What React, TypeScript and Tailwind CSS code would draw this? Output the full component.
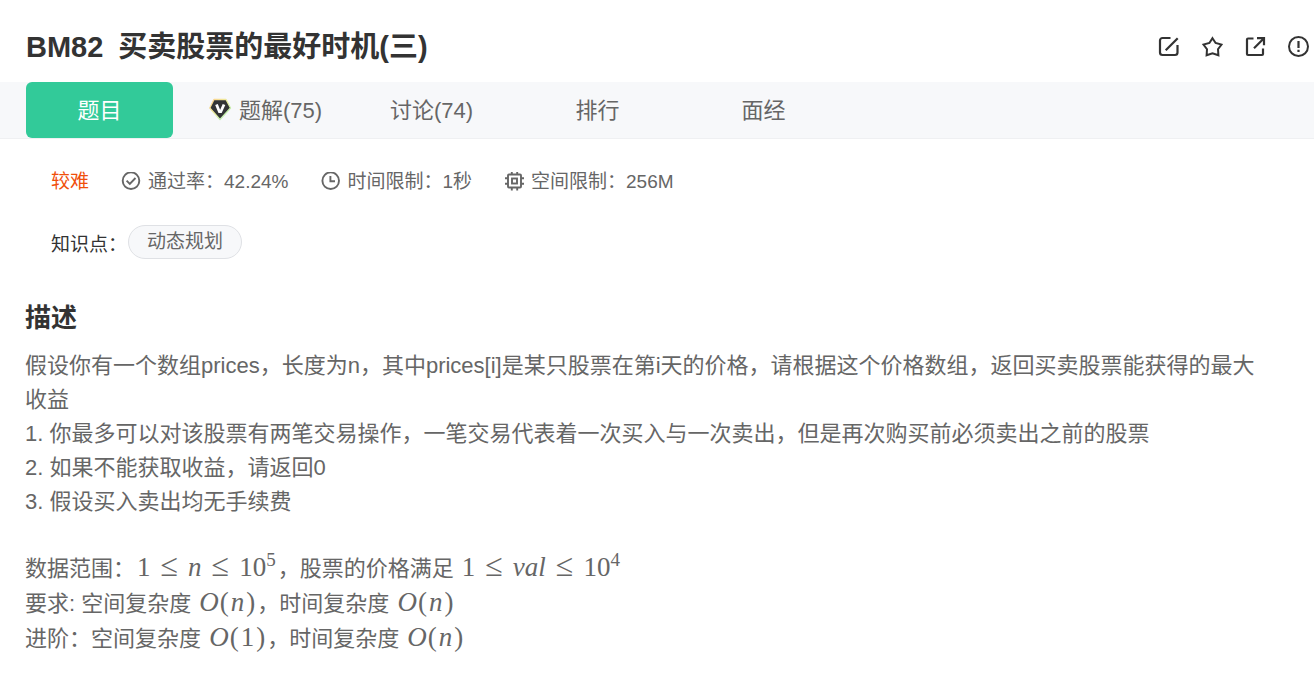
import type { ReactNode } from "react";

function EditIcon() {
  return (
    <svg viewBox="0 0 22 22" className="size-[22px]" fill="none" stroke="currentColor" strokeWidth="2.200" aria-hidden="true">
      <path d="M12.500 2H4.500A2.500 2.500 0 0 0 2 4.500V16.500A2.500 2.500 0 0 0 4.500 19H17A2.500 2.500 0 0 0 19.500 16.500V9" />
      <path d="M19.700 2.300 7.700 14.300" />
    </svg>
  );
}

function StarIcon() {
  return (
    <svg viewBox="0 0 22 22" className="size-[22px]" fill="none" stroke="currentColor" strokeWidth="2" strokeLinejoin="miter" aria-hidden="true">
      <path d="M11.500 2.200 14.600 7 20.500 8.600 17 13.200 17.400 19.300 11.500 17.300 5.600 19.300 6 13.200 2.500 8.600 8.400 7Z" />
    </svg>
  );
}

function ShareIcon() {
  return (
    <svg viewBox="0 0 22 22" className="size-[22px]" fill="none" stroke="currentColor" strokeWidth="2.200" aria-hidden="true">
      <path d="M9.500 2.500H4A1 1 0 0 0 3 3.500V18A1 1 0 0 0 4 19H18A1 1 0 0 0 19 18V12.500" />
      <path d="M13 2.200H20V9.200M20 2.200 10 12.200" />
    </svg>
  );
}

function AlertIcon() {
  return (
    <svg viewBox="0 0 22 22" className="size-[22px]" fill="none" stroke="currentColor" strokeWidth="2" aria-hidden="true">
      <circle cx="11.500" cy="10.500" r="9.500" />
      <path d="M11.500 5V12M11.500 13.700V15.900" strokeWidth="2.200" />
    </svg>
  );
}

function CheckIcon() {
  return (
    <svg viewBox="0 0 20 20" className="size-5" fill="none" stroke="currentColor" strokeWidth="1.900" aria-hidden="true">
      <circle cx="10" cy="8.700" r="8.300" />
      <path d="M5.600 8.600 8.800 11.800 14.500 6" />
    </svg>
  );
}

function ClockIcon() {
  return (
    <svg viewBox="0 0 20 20" className="size-5" fill="none" stroke="currentColor" strokeWidth="1.900" aria-hidden="true">
      <circle cx="10.700" cy="8.700" r="8.300" />
      <path d="M10.400 4V9.300H15" />
    </svg>
  );
}

function ChipIcon() {
  return (
    <svg viewBox="0 0 20 20" className="size-5" fill="none" stroke="currentColor" strokeWidth="1.900" aria-hidden="true">
      <rect x="4" y="2.500" width="13" height="13" rx="1" />
      <rect x="8" y="6.500" width="5" height="5" />
      <path d="M7.800 0V2.500M13.200 0V2.500M7.800 15.500V18.500M13.200 15.500V18.500M1 6.300H4M1 11.700H4M17 6.300H20M17 11.700H20" />
    </svg>
  );
}

function VipBadge() {
  return (
    <svg viewBox="0 0 24 24" className="size-6" aria-hidden="true">
      <defs>
        <linearGradient id="badge-edge" x1="0" y1="0" x2="1" y2="1">
          <stop offset="0" stopColor="#ffd08a" />
          <stop offset="0.500" stopColor="#e8f0a0" />
          <stop offset="1" stopColor="#9fefc0" />
        </linearGradient>
      </defs>
      <path d="M5 1.500H17L21.500 10 11 21.500 .8 10Z" fill="#333536" stroke="url(#badge-edge)" strokeWidth="1.300" strokeLinejoin="round" />
      <path d="M7.500 6.500 10.400 13.700H11.800L15 6.500" fill="none" stroke="#fff" strokeWidth="2.800" />
    </svg>
  );
}

const actions = [
  { label: "编辑", icon: <EditIcon /> },
  { label: "收藏", icon: <StarIcon /> },
  { label: "分享", icon: <ShareIcon /> },
  { label: "反馈", icon: <AlertIcon /> },
];

const tabs = [
  { label: "题目", active: true },
  { label: "题解(75)", vip: true },
  { label: "讨论(74)" },
  { label: "排行" },
  { label: "面经" },
];

const limits = [
  { icon: <CheckIcon />, text: "通过率：42.24%" },
  { icon: <ClockIcon />, text: "时间限制：1秒" },
  { icon: <ChipIcon />, text: "空间限制：256M" },
];

function MathText({ children }: { children: ReactNode }) {
  return (
    <span className="inline-flex items-baseline whitespace-nowrap px-0.5 font-['Liberation_Serif',serif] text-[27px] leading-none">
      {children}
    </span>
  );
}

function Leq() {
  return <span className="px-2.5 text-[32px] leading-6">≤</span>;
}

function Sup({ children }: { children: ReactNode }) {
  return <sup className="-top-2.5 text-[19px] leading-none">{children}</sup>;
}

function BigO({ arg, italic }: { arg: string; italic?: boolean }) {
  return (
    <MathText>
      <i>O</i>
      <span className="pl-px">(</span>
      {italic ? <i className="px-0.5">{arg}</i> : <span className="px-0.5">{arg}</span>}
      <span>)</span>
    </MathText>
  );
}

export default function App() {
  return (
    <main className="min-h-screen bg-white font-['Liberation_Sans','Noto_Sans_CJK_SC',sans-serif] text-[22px] text-[#666]">
      <header className="flex h-[82px] items-center justify-between pt-3 pr-[5px] pl-[26px] text-[#333]">
        <h1 className="flex gap-[15px] text-[29px] leading-10 font-bold">
          <span>BM82</span>
          <span>买卖股票的最好时机(三)</span>
        </h1>
        <div className="flex gap-[21px]">
          {actions.map((a) => (
            <button key={a.label} type="button" aria-label={a.label}>
              {a.icon}
            </button>
          ))}
        </div>
      </header>

      <nav className="flex gap-[19px] border-b border-[#eff0f2] bg-[#f7f8fa] pl-[26px]">
        {tabs.map((t) => (
          <a
            key={t.label}
            href="#"
            className={
              t.active
                ? "flex h-14 w-[147px] items-center justify-center rounded-md bg-[#32ca99] text-white"
                : "flex h-14 w-[147px] items-center justify-center gap-1.5"
            }
          >
            {t.vip && <VipBadge />}
            {t.label}
          </a>
        ))}
      </nav>

      <section className="px-[51px] pt-[29px] text-[19px] leading-7">
        <div className="flex items-center gap-8">
          <span className="text-[#f04f0b]">较难</span>
          {limits.map((l) => (
            <span key={l.text} className="flex items-center gap-[7px]">
              {l.icon}
              {l.text}
            </span>
          ))}
        </div>
        <div className="flex items-start gap-px pt-[29px]">
          <span className="pt-1.5 text-[#333]">知识点：</span>
          <a href="#" className="flex h-[34px] items-center rounded-full border border-[#dfe1e5] bg-[#f7f8fa] px-[18px]">
            动态规划
          </a>
        </div>
      </section>

      <article className="pr-12 pl-[25px] pt-[41px]">
        <h2 className="text-[26px] leading-9 font-bold text-[#333]">描述</h2>
        <p className="pt-[13px] leading-[34px]">
          假设你有一个数组prices，长度为n，其中prices[i]是某只股票在第i天的价格，请根据这个价格数组，返回买卖股票能获得的最大收益
          <br />
          1. 你最多可以对该股票有两笔交易操作，一笔交易代表着一次买入与一次卖出，但是再次购买前必须卖出之前的股票
          <br />
          2. 如果不能获取收益，请返回0
          <br />
          3. 假设买入卖出均无手续费
        </p>
        <div className="pt-8 leading-[35px]">
          <p>
            数据范围：
            <MathText>
              1<Leq />
              <i>n</i>
              <Leq />
              10<Sup>5</Sup>
            </MathText>
            ，股票的价格满足{" "}
            <MathText>
              1<Leq />
              <i>val</i>
              <Leq />
              10<Sup>4</Sup>
            </MathText>
          </p>
          <p>
            要求: 空间复杂度 <BigO arg="n" italic />，时间复杂度 <BigO arg="n" italic />
          </p>
          <p>
            进阶：空间复杂度 <BigO arg="1" />，时间复杂度 <BigO arg="n" italic />
          </p>
        </div>
      </article>
    </main>
  );
}
